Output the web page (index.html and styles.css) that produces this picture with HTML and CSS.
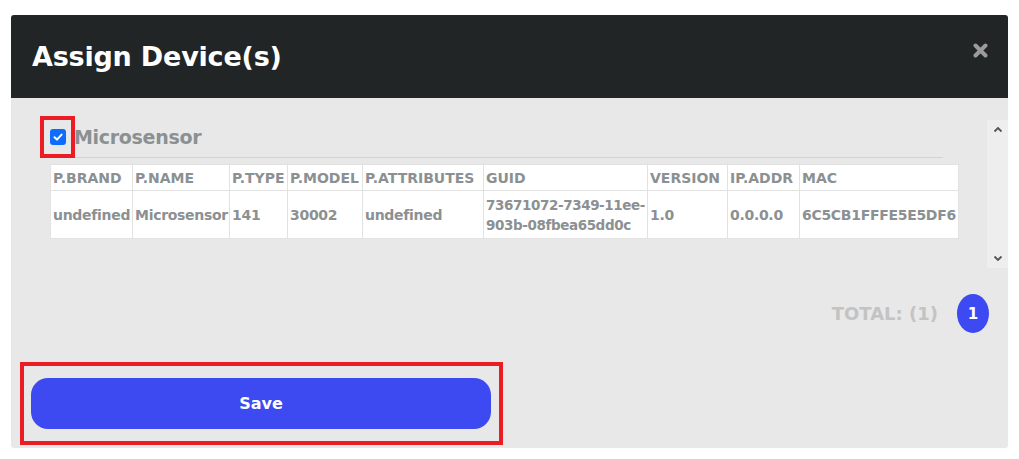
FILE: index.html
```html
<!DOCTYPE html>
<html lang="en">
<head>
<meta charset="utf-8">
<title>Assign Device(s)</title>
<link rel="stylesheet" href="styles.css">
</head>
<body>
<div class="modal">
  <div class="modal-header">
    <h1 class="modal-title">Assign Device(s)</h1>
    <button class="close-btn" aria-label="Close">
      <svg width="15" height="15" viewBox="0 0 15 15"><path d="M2.5 2.5 L12.5 12.5 M12.5 2.5 L2.5 12.5" stroke="#9b9b9b" stroke-width="4" stroke-linecap="round"/></svg>
    </button>
  </div>
  <div class="modal-body">
    <div class="scroll-wrap">
      <div class="scroll-content">
        <div class="group-row">
          <span class="mark-box">
            <span class="checkbox">
              <svg width="12" height="12" viewBox="0 0 12 12"><path d="M2.5 6.2 L5 8.6 L9.6 3.6" stroke="#fff" stroke-width="2" fill="none" stroke-linecap="round" stroke-linejoin="round"/></svg>
            </span>
          </span>
          <span class="group-title">Microsensor</span>
        </div>
        <table class="dev-table">
          <colgroup>
            <col class="c1"><col class="c2"><col class="c3"><col class="c4"><col class="c5"><col class="c6"><col class="c7"><col class="c8"><col class="c9">
          </colgroup>
          <thead>
            <tr><th>P.BRAND</th><th>P.NAME</th><th>P.TYPE</th><th>P.MODEL</th><th>P.ATTRIBUTES</th><th>GUID</th><th>VERSION</th><th>IP.ADDR</th><th>MAC</th></tr>
          </thead>
          <tbody>
            <tr><td>undefined</td><td>Microsensor</td><td>141</td><td>30002</td><td>undefined</td><td class="guid">73671072-7349-11ee-903b-08fbea65dd0c</td><td>1.0</td><td>0.0.0.0</td><td>6C5CB1FFFE5E5DF6</td></tr>
          </tbody>
        </table>
      </div>
      <div class="scrollbar">
        <svg width="10" height="7" viewBox="0 0 10 7"><path d="M1.5 5.5 L5 2 L8.5 5.5" stroke="#555" stroke-width="1.8" fill="none"/></svg>
        <svg width="10" height="7" viewBox="0 0 10 7"><path d="M1.5 1.5 L5 5 L8.5 1.5" stroke="#555" stroke-width="1.8" fill="none"/></svg>
      </div>
    </div>
    <div class="total-row">
      <span class="total-text">TOTAL: (1)</span>
      <span class="page-badge">1</span>
    </div>
    <div class="save-box">
      <button class="save-btn">Save</button>
    </div>
  </div>
</div>
</body>
</html>
```

FILE: styles.css
```css
* { box-sizing: border-box; }
html, body { margin: 0; padding: 0; background: #ffffff; }
body { font-family: "DejaVu Sans", "Open Sans", sans-serif; }

.modal {
  margin: 15px 0 0 11px;
  width: 997px;
  height: 433px;
  background: #e8e8e8;
  border-radius: 3px;
  overflow: hidden;
}
.modal-header {
  height: 83px;
  background: #212526;
  display: flex;
  align-items: center;
  justify-content: space-between;
  padding: 0 20px 0 21px;
}
.modal-title {
  margin: 0;
  color: #ffffff;
  font-size: 27px;
  font-weight: 700;
  letter-spacing: -0.2px;
}
.close-btn {
  background: none;
  border: 0;
  padding: 0;
  width: 15px;
  height: 15px;
  margin-bottom: 12px;
}
.close-btn svg { display: block; }

.modal-body {
  padding: 18px 0 0 0;
}
.scroll-wrap {
  display: flex;
  height: 152px;
}
.scroll-content {
  flex: 1;
  padding-left: 29px;
}
.group-row {
  width: 903px;
  height: 42px;
  display: flex;
  align-items: center;
  border-bottom: 1px solid #d4d4d4;
}
.mark-box {
  width: 35px;
  height: 42px;
  border: 4px solid #ec1c24;
  display: flex;
  align-items: center;
  padding-left: 6px;
}
.checkbox {
  width: 16px;
  height: 16px;
  border-radius: 3px;
  background: #0d6efd;
  display: flex;
  align-items: center;
  justify-content: center;
}
.checkbox svg { display: block; }
.group-title {
  margin-left: -1px;
  color: #8b9092;
  font-size: 19px;
  font-weight: 700;
  letter-spacing: -0.3px;
}

.dev-table {
  margin: 6px 0 0 10px;
  width: 908px;
  table-layout: fixed;
  border-collapse: collapse;
  background: #ffffff;
  color: #8b9092;
  font-size: 14px;
  font-weight: 700;
}
.dev-table th, .dev-table td {
  border: 1px solid #e2e2e2;
  padding: 0 0 0 2px;
  text-align: left;
  vertical-align: middle;
  line-height: 20px;
  white-space: nowrap;
  overflow: hidden;
}
.dev-table td { letter-spacing: -0.3px; }
.dev-table th { height: 26px; }
.dev-table td { height: 48px; }
.dev-table td.guid {
  white-space: normal;
  font-size: 13.5px;
  letter-spacing: -0.4px;
}
.c1 { width: 82px; }
.c2 { width: 97px; }
.c3 { width: 58px; }
.c4 { width: 75px; }
.c5 { width: 121px; }
.c6 { width: 164px; }
.c7 { width: 80px; }
.c8 { width: 72px; }
.c9 { width: 159px; }

.scrollbar {
  width: 21px;
  margin-top: 4px;
  height: 148px;
  background: #eeeeee;
  display: flex;
  flex-direction: column;
  justify-content: space-between;
  align-items: center;
  padding: 6px 0 6px 0;
}
.scrollbar svg { display: block; }

.total-row {
  display: flex;
  justify-content: flex-end;
  align-items: center;
  margin-top: 26px;
  padding-right: 19px;
}
.total-text {
  color: #c3c3c3;
  font-size: 18px;
  font-weight: 700;
  margin-right: 19px;
}
.page-badge {
  width: 32px;
  height: 39px;
  border-radius: 50%;
  background: #3d4af2;
  color: #ffffff;
  font-size: 15px;
  font-weight: 700;
  display: flex;
  align-items: center;
  justify-content: center;
}

.save-box {
  margin: 29px 0 0 9px;
  width: 483px;
  height: 83px;
  border: 4px solid #ec1c24;
  padding: 12px 8px 12px 7px;
}
.save-btn {
  display: block;
  width: 100%;
  height: 51px;
  border: 0;
  border-radius: 17px;
  background: #3d4af2;
  color: #ffffff;
  font-family: "DejaVu Sans", "Open Sans", sans-serif;
  font-size: 16px;
  font-weight: 700;
}
```
